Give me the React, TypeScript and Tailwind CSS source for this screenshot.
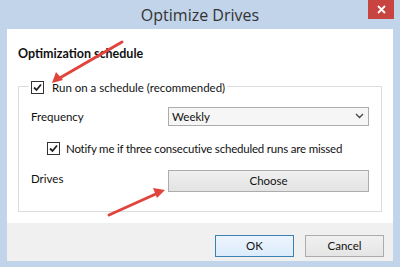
import React from "react";

function Check() {
  return (
    <div className="w-[13px] h-[13px] border border-[#333] bg-white flex items-center justify-center shrink-0">
      <svg width="11" height="11" viewBox="0 0 11 11">
        <path d="M2 5.5 L4.5 8 L9 2.5" fill="none" stroke="#222" strokeWidth="1.8" />
      </svg>
    </div>
  );
}

export default function App() {
  const font = { fontFamily: 'Lato, "Open Sans", sans-serif' };
  return (
    <div className="relative w-[400px] h-[267px] bg-[#c2d4e9] flex flex-col overflow-hidden" style={font}>
      <div className="relative h-[29px] flex items-center justify-center text-[16px] text-[#333]" style={{ fontFamily: '"Open Sans", sans-serif' }}>
        Optimize Drives
        <div className="absolute right-[6px] top-0 w-[26px] h-[19px] bg-[#c84440] flex items-center justify-center">
          <svg width="9" height="9" viewBox="0 0 9 9">
            <path d="M1 1 L8 8 M8 1 L1 8" stroke="#fff" strokeWidth="1.8" />
          </svg>
        </div>
      </div>
      <div className="mx-[7px] mb-[6px] flex-1 flex flex-col bg-white">
        <div className="flex-1 flex flex-col px-[11px]">
          <div className="mt-[16px] text-[12.5px] font-bold text-[#111]">Optimization schedule</div>
          <div className="relative mt-[22px] h-[126px] border border-[#dcdcdc] px-[12px]">
            <div className="absolute left-[10px] -top-[8px] flex items-center gap-[8px] bg-white px-[2px] text-[11.5px] text-[#111] whitespace-nowrap">
              <Check />
              <span>Run on a schedule (recommended)</span>
            </div>
            <div className="mt-[20px] flex items-start">
              <div className="w-[140px] text-[11.5px] text-[#111] pt-[1px]">Frequency</div>
              <div className="w-[205px] h-[19px] border border-[#acacac] bg-[#f6f6f6] flex items-center justify-between pl-[3px] pr-[4px] text-[11.5px] text-[#111]">
                <span>Weekly</span>
                <svg width="9" height="6" viewBox="0 0 9 6">
                  <path d="M1 1 L4.5 4.5 L8 1" fill="none" stroke="#444" strokeWidth="1.3" />
                </svg>
              </div>
            </div>
            <div className="mt-[14px] ml-[16px] flex items-center gap-[6px] text-[11.5px] tracking-[-0.2px] text-[#111] whitespace-nowrap">
              <Check />
              <span>Notify me if three consecutive scheduled runs are missed</span>
            </div>
            <div className="mt-[13px] flex items-start">
              <div className="w-[140px] text-[11.5px] text-[#111]">Drives</div>
              <div className="w-[205px] h-[22px] border border-[#acacac] bg-gradient-to-b from-[#f0f0f0] to-[#e3e3e3] flex items-center justify-center text-[11.5px] text-[#111]">
                Choose
              </div>
            </div>
          </div>
        </div>
        <div className="h-[38px] bg-[#f0f0f0] flex items-end justify-end gap-[11px] pr-[9px] pb-[4px]">
          <div className="w-[79px] h-[22px] border border-[#3c7fb1] bg-gradient-to-b from-[#ecf4fc] to-[#dcecfc] flex items-center justify-center text-[11.5px] text-[#111]">OK</div>
          <div className="w-[79px] h-[22px] border border-[#acacac] bg-gradient-to-b from-[#f0f0f0] to-[#e5e5e5] flex items-center justify-center text-[11.5px] text-[#111]">Cancel</div>
        </div>
      </div>
      <svg className="absolute left-0 top-0 pointer-events-none" width="400" height="267" viewBox="0 0 400 267">
        <line x1="122" y1="42" x2="58" y2="79" stroke="#e0443c" strokeWidth="3" strokeLinecap="round" />
        <path d="M52 83 L56 72 L63 80 Z" fill="#e0443c" />
        <line x1="109" y1="215" x2="158" y2="193" stroke="#e0443c" strokeWidth="3" strokeLinecap="round" />
        <path d="M165 190 L153 188 L157 198 Z" fill="#e0443c" />
      </svg>
    </div>
  );
}
